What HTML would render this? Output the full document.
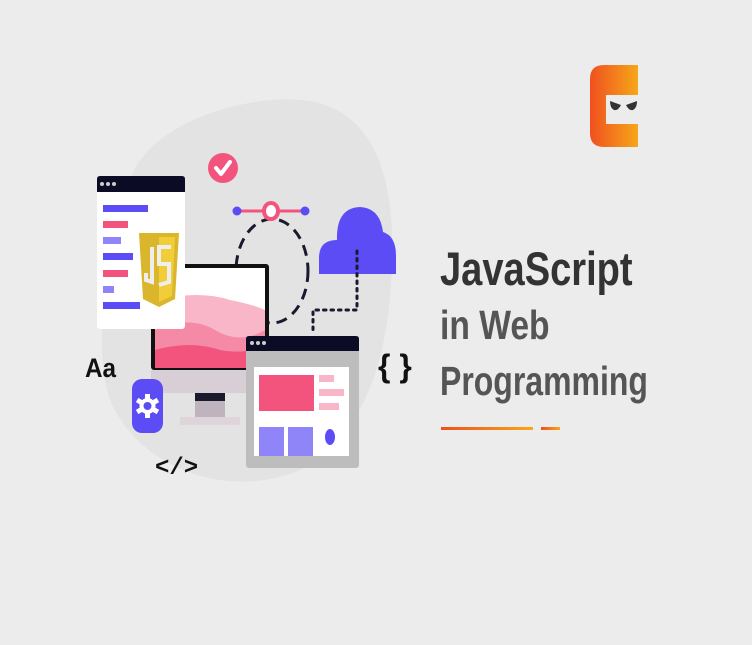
<!DOCTYPE html>
<html><head><meta charset="utf-8"><style>
html,body{margin:0;padding:0;}
body{width:752px;height:645px;background:#ececec;overflow:hidden;position:relative;font-family:"Liberation Sans",sans-serif;}
.t{position:absolute;left:440px;font-weight:bold;transform-origin:0 0;white-space:nowrap;}
</style></head><body>
<svg width="752" height="645" style="position:absolute;left:0;top:0">
<defs>
<linearGradient id="lg" x1="0" x2="1"><stop offset="0" stop-color="#f0501f"/><stop offset="1" stop-color="#f6a719"/></linearGradient>
</defs>
<path d="M130 180 C150 120 250 95 300 100 C370 105 395 170 392 260 C390 350 370 430 300 470 C230 500 140 470 110 400 C90 340 110 250 130 180Z" fill="#e3e3e3"/>
<!-- logo -->
<path d="M604 65 H638 V95 H606 V124 H638 V147 H604 Q590 147 590 133 V79 Q590 65 604 65Z" fill="url(#lg)"/>
<path d="M610 101 L621 105 Q618 111 614 110 Q610 108 610 101Z M637 101 L626 105 Q629 111 633 110 Q637 108 637 101Z" fill="#333"/>
<!-- check -->
<circle cx="223" cy="168" r="15" fill="#f2547d"/>
<path d="M216 168 L221 174 L230 162" stroke="#fff" stroke-width="4" fill="none" stroke-linecap="round" stroke-linejoin="round"/>
<!-- dashed ellipse -->
<ellipse cx="272" cy="271" rx="36" ry="52" fill="none" stroke="#1a1a2e" stroke-width="3" stroke-dasharray="11 7"/>
<line x1="236" y1="211" x2="306" y2="211" stroke="#f2547d" stroke-width="3"/>
<circle cx="237" cy="211" r="4.5" fill="#5b4cf5"/><circle cx="305" cy="211" r="4.5" fill="#5b4cf5"/>
<ellipse cx="271" cy="211" rx="7" ry="8" fill="#fff" stroke="#f2547d" stroke-width="4"/>
<!-- cloud -->
<path d="M319 274 V258 Q319 240 337 240 Q336 208 360 207 Q380 208 383 232 Q396 236 396 256 V274Z" fill="#5b4cf5"/>
<path d="M357 251 V310 H313 V330" stroke="#1a1a2e" stroke-width="3" fill="none" stroke-dasharray="2.5 5" stroke-linecap="round"/>
<!-- monitor -->
<rect x="151" y="264" width="118" height="106" fill="#111" rx="3"/>
<rect x="155" y="268" width="110" height="100" fill="#fff"/>
<path d="M155 300 Q200 290 230 300 Q255 305 265 310 V368 H155Z" fill="#f9b6c8"/>
<path d="M155 330 Q190 315 215 330 Q240 345 265 330 V368 H155Z" fill="#f48aa6"/>
<path d="M155 350 Q190 340 220 350 Q245 355 265 345 V368 H155Z" fill="#f2547d"/>
<rect x="151" y="370" width="118" height="23" fill="#d8cfd6"/>
<rect x="195" y="393" width="30" height="8" fill="#1a1a2e"/>
<rect x="195" y="401" width="30" height="16" fill="#bfb4bd"/>
<rect x="180" y="417" width="60" height="8" fill="#ded4da"/>
<!-- left window -->
<rect x="97" y="176" width="88" height="153" fill="#fff" rx="3"/>
<path d="M100 176 H182 Q185 176 185 179 V192 H97 V179 Q97 176 100 176Z" fill="#0b0b25"/>
<circle cx="102" cy="184" r="2" fill="#ccc"/><circle cx="108" cy="184" r="2" fill="#ccc"/><circle cx="114" cy="184" r="2" fill="#ccc"/>
<rect x="103" y="205" width="45" height="7" fill="#5b4cf5"/>
<rect x="103" y="221" width="25" height="7" fill="#f2547d"/>
<rect x="103" y="237" width="18" height="7" fill="#8f84f8"/>
<rect x="103" y="253" width="30" height="7" fill="#5b4cf5"/>
<rect x="103" y="270" width="25" height="7" fill="#f2547d"/>
<rect x="103" y="286" width="11" height="7" fill="#8f84f8"/>
<rect x="103" y="302" width="37" height="7" fill="#5b4cf5"/>
<path d="M139 233 H179 L175 299 L159 307 L143 299Z" fill="#d9b62b"/>
<path d="M159 237 H175 L172 296 L159 302Z" fill="#f2cd3a"/>
<path d="M152 247 V282 L146 280 V273" stroke="#eee" stroke-width="4" fill="none"/>
<path d="M171 247 H159 V264 H169 V282 L159 285" stroke="#eee" stroke-width="4" fill="none"/>
<!-- right window -->
<rect x="246" y="336" width="113" height="132" fill="#bdbdbd" rx="3"/>
<path d="M249 336 H356 Q359 336 359 339 V351 H246 V339 Q246 336 249 336Z" fill="#0b0b25"/>
<circle cx="252" cy="343" r="2" fill="#ccc"/><circle cx="258" cy="343" r="2" fill="#ccc"/><circle cx="264" cy="343" r="2" fill="#ccc"/>
<rect x="254" y="367" width="95" height="89" fill="#fff"/>
<rect x="259" y="375" width="55" height="36" fill="#f2547d"/>
<rect x="319" y="375" width="15" height="7" fill="#f9b6c8"/>
<rect x="319" y="389" width="25" height="7" fill="#f9b6c8"/>
<rect x="319" y="403" width="20" height="7" fill="#f9b6c8"/>
<rect x="259" y="427" width="25" height="29" fill="#8f84f8"/>
<rect x="288" y="427" width="25" height="29" fill="#8f84f8"/>
<ellipse cx="330" cy="437" rx="5" ry="8" fill="#5b4cf5"/>
<!-- gear -->
<rect x="132" y="379" width="31" height="54" rx="10" fill="#5b4cf5"/>
<g transform="translate(147.5 406)" fill="#fff">
<circle r="8"/>
<rect x="-2.5" y="-12" width="5" height="24"/>
<rect x="-2.5" y="-12" width="5" height="24" transform="rotate(60)"/>
<rect x="-2.5" y="-12" width="5" height="24" transform="rotate(120)"/>
<circle r="4" fill="#5b4cf5"/>
</g>
<!-- underline -->
<rect x="441" y="427" width="92" height="3" fill="url(#lg)"/>
<rect x="541" y="427" width="19" height="3" fill="url(#lg)"/>
</svg>
<div style="position:absolute;left:85px;top:353px;font-size:27px;font-weight:bold;color:#111;transform:scaleX(0.9);transform-origin:0 0">Aa</div>
<div style="position:absolute;left:155px;top:455px;font-size:24px;font-weight:bold;color:#111;font-family:'Liberation Mono',monospace">&lt;/&gt;</div>
<div style="position:absolute;left:378px;top:348px;font-size:32px;font-weight:bold;color:#111;white-space:pre">{ }</div>
<div class="t" style="top:241px;font-size:47px;color:#333;transform:scaleX(0.81)">JavaScript</div>
<div class="t" style="top:302px;font-size:41px;color:#555;transform:scaleX(0.82)">in Web</div>
<div class="t" style="top:358px;font-size:41px;color:#555;transform:scaleX(0.78)">Programming</div>
</body></html>
